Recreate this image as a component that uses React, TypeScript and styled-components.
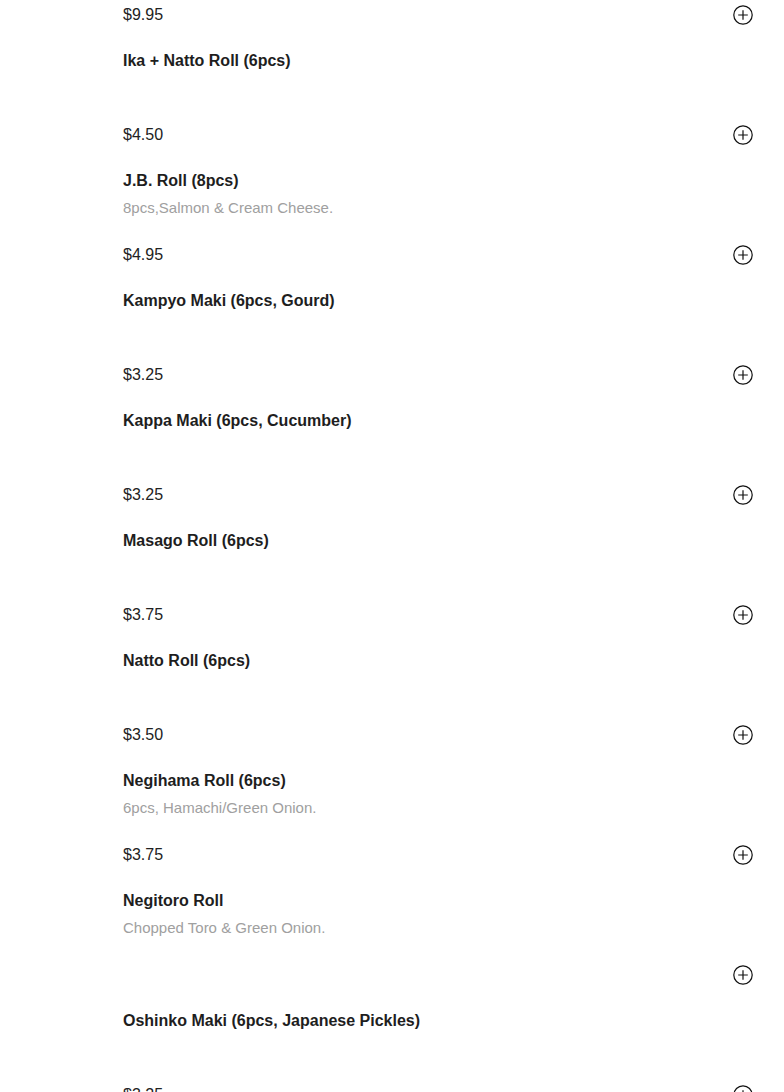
import styled, { createGlobalStyle } from 'styled-components';

type Item = {
  name: string;
  description?: string;
  price?: string;
};

const ITEMS: Item[] = [
  { name: 'Ika + Natto Roll (6pcs)', price: '$4.50' },
  { name: 'J.B. Roll (8pcs)', description: '8pcs,Salmon & Cream Cheese.', price: '$4.95' },
  { name: 'Kampyo Maki (6pcs, Gourd)', price: '$3.25' },
  { name: 'Kappa Maki (6pcs, Cucumber)', price: '$3.25' },
  { name: 'Masago Roll (6pcs)', price: '$3.75' },
  { name: 'Natto Roll (6pcs)', price: '$3.50' },
  { name: 'Negihama Roll (6pcs)', description: '6pcs, Hamachi/Green Onion.', price: '$3.75' },
  { name: 'Negitoro Roll', description: 'Chopped Toro & Green Onion.' },
  { name: 'Oshinko Maki (6pcs, Japanese Pickles)', price: '$3.25' },
];

const PlusIcon = () => (
  <svg width="20" height="20" viewBox="0 0 20 20" fill="none" stroke="#111" strokeWidth="1.2">
    <circle cx="10" cy="10" r="9.2" />
    <path d="M10 5.2v9.6M5.2 10h9.6" />
  </svg>
);

const PriceLine = ({ price }: { price?: string }) => (
  <PriceRow>
    <Price>{price}</Price>
    <AddBtn aria-label="Add">
      <PlusIcon />
    </AddBtn>
  </PriceRow>
);

const App = () => {
  return (
    <>
      <GlobalStyle />
      <Menu>
        <Leading>
          <PriceLine price="$9.95" />
        </Leading>
        {ITEMS.map((item) => (
          <MenuItem key={item.name}>
            <Name>{item.name}</Name>
            <Description>{item.description}</Description>
            <PriceLine price={item.price} />
          </MenuItem>
        ))}
      </Menu>
    </>
  );
};

export default App;

const GlobalStyle = createGlobalStyle`
  html, body {
    margin: 0;
    padding: 0;
    background: #fff;
    overflow: hidden;
  }
  body {
    font-family: 'Liberation Sans', Arial, sans-serif;
    color: #222;
  }
`;

const Menu = styled.div`
  display: flex;
  flex-direction: column;
  padding: 5px 31px 0 123px;
`;

const Leading = styled.div`
  padding-bottom: 26px;
`;

const MenuItem = styled.div`
  display: flex;
  flex-direction: column;
  padding-bottom: 26px;
`;

const Name = styled.div`
  font-size: 16px;
  font-weight: 700;
  line-height: 20px;
  color: #1e1e1e;
`;

const Description = styled.div`
  margin-top: 7px;
  min-height: 20px;
  font-size: 15px;
  line-height: 20px;
  color: #a0a0a0;
`;

const PriceRow = styled.div`
  display: flex;
  align-items: center;
  justify-content: space-between;
  height: 20px;

  ${Description} + & {
    margin-top: 27px;
  }
`;

const Price = styled.span`
  font-size: 16px;
  line-height: 20px;
  color: #222;
`;

const AddBtn = styled.button`
  display: flex;
  align-items: center;
  justify-content: center;
  width: 20px;
  height: 20px;
  padding: 0;
  border: none;
  background: none;
  cursor: pointer;
`;
